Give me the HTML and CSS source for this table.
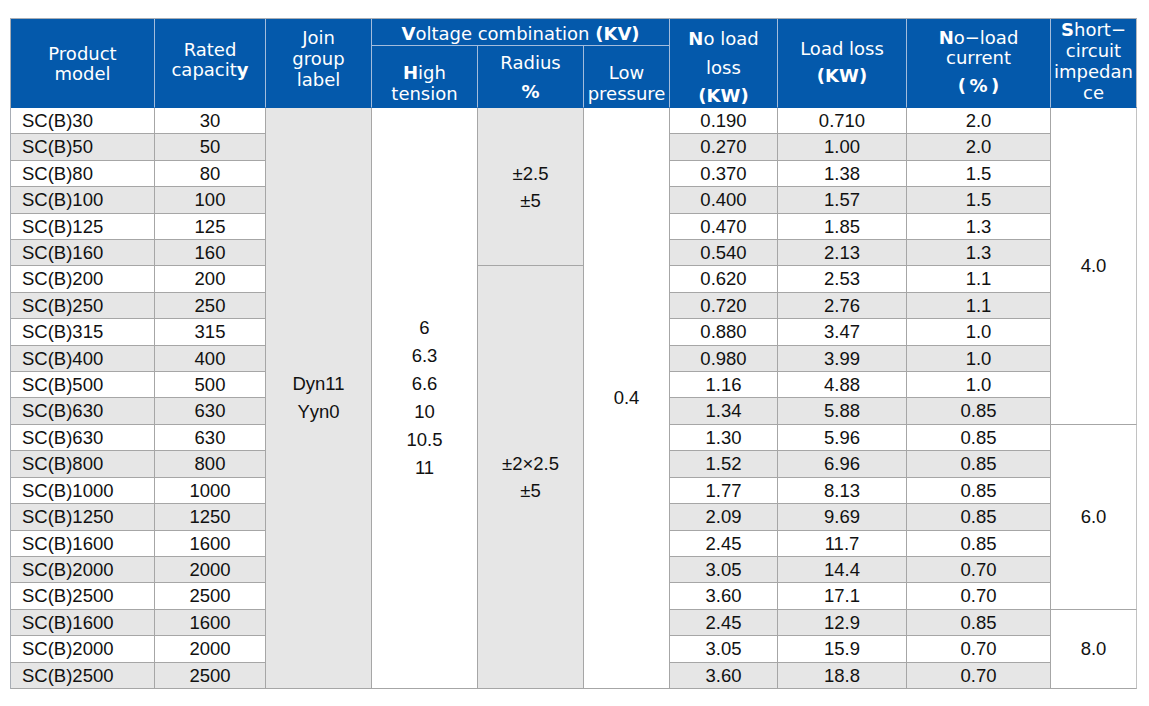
FILE: index.html
```html
<!DOCTYPE html>
<html lang="en">
<head>
<meta charset="utf-8">
<title>SC(B) dry-type transformer parameters</title>
<link rel="stylesheet" href="styles.css">
</head>
<body>
<div class="page">
  <div class="spec">
    <div class="h span2 h-model"><span class="ln">Product</span><span class="ln">model</span></div>
    <div class="h span2 h-rated"><span class="ln">Rated</span><span class="ln">capacit<b>y</b></span></div>
    <div class="h span2 h-join"><span class="ln">Join</span><span class="ln">group</span><span class="ln">label</span></div>
    <div class="h h-volt"><span class="ln"><b>V</b>oltage combination <b>(KV)</b></span></div>
    <div class="h span2 h-nll"><span class="ln"><b>N</b>o load</span><span class="ln gap">loss</span><span class="ln gap"><b>(KW)</b></span></div>
    <div class="h span2 h-ll"><span class="ln">Load loss</span><span class="ln gap"><b>(KW)</b></span></div>
    <div class="h span2 h-nlc"><span class="ln"><b>N</b>o−load</span><span class="ln">current</span><span class="ln gap"><b>(&thinsp;%&thinsp;)</b></span></div>
    <div class="h span2 h-sc last"><span class="ln"><b>S</b>hort−</span><span class="ln">circuit</span><span class="ln">impedan</span><span class="ln">ce</span></div>
    <div class="h h-high"><span class="ln"><b>H</b>igh</span><span class="ln">tension</span></div>
    <div class="h h-rad"><span class="ln">Radius</span><span class="ln gap"><b>%</b></span></div>
    <div class="h h-low"><span class="ln">Low</span><span class="ln">pressure</span></div>

    <!-- row 1 -->
    <div class="b model">SC(B)30</div><div class="b">30</div>
    <div class="b g blk r22"><span>Dyn11</span><span>Yyn0</span></div>
    <div class="b blk r22"><span>6</span><span>6.3</span><span>6.6</span><span>10</span><span>10.5</span><span>11</span></div>
    <div class="b g blk tight r6"><span>±2.5</span><span>±5</span></div>
    <div class="b blk r22"><span>0.4</span></div>
    <div class="b">0.190</div><div class="b">0.710</div><div class="b">2.0</div>
    <div class="b blk last r12"><span>4.0</span></div>
    <!-- row 2 -->
    <div class="b g model">SC(B)50</div><div class="b g">50</div><div class="b g">0.270</div><div class="b g">1.00</div><div class="b g">2.0</div>
    <div class="b model">SC(B)80</div><div class="b">80</div><div class="b">0.370</div><div class="b">1.38</div><div class="b">1.5</div>
    <div class="b g model">SC(B)100</div><div class="b g">100</div><div class="b g">0.400</div><div class="b g">1.57</div><div class="b g">1.5</div>
    <div class="b model">SC(B)125</div><div class="b">125</div><div class="b">0.470</div><div class="b">1.85</div><div class="b">1.3</div>
    <div class="b g model">SC(B)160</div><div class="b g">160</div><div class="b g">0.540</div><div class="b g">2.13</div><div class="b g">1.3</div>
    <!-- row 7 -->
    <div class="b model">SC(B)200</div><div class="b">200</div>
    <div class="b g blk tight r16"><span>±2×2.5</span><span>±5</span></div>
    <div class="b">0.620</div><div class="b">2.53</div><div class="b">1.1</div>
    <div class="b g model">SC(B)250</div><div class="b g">250</div><div class="b g">0.720</div><div class="b g">2.76</div><div class="b g">1.1</div>
    <div class="b model">SC(B)315</div><div class="b">315</div><div class="b">0.880</div><div class="b">3.47</div><div class="b">1.0</div>
    <div class="b g model">SC(B)400</div><div class="b g">400</div><div class="b g">0.980</div><div class="b g">3.99</div><div class="b g">1.0</div>
    <div class="b model">SC(B)500</div><div class="b">500</div><div class="b">1.16</div><div class="b">4.88</div><div class="b">1.0</div>
    <div class="b g model">SC(B)630</div><div class="b g">630</div><div class="b g">1.34</div><div class="b g">5.88</div><div class="b g">0.85</div>
    <!-- row 13 -->
    <div class="b model">SC(B)630</div><div class="b">630</div><div class="b">1.30</div><div class="b">5.96</div><div class="b">0.85</div>
    <div class="b blk last r7"><span>6.0</span></div>
    <div class="b g model">SC(B)800</div><div class="b g">800</div><div class="b g">1.52</div><div class="b g">6.96</div><div class="b g">0.85</div>
    <div class="b model">SC(B)1000</div><div class="b">1000</div><div class="b">1.77</div><div class="b">8.13</div><div class="b">0.85</div>
    <div class="b g model">SC(B)1250</div><div class="b g">1250</div><div class="b g">2.09</div><div class="b g">9.69</div><div class="b g">0.85</div>
    <div class="b model">SC(B)1600</div><div class="b">1600</div><div class="b">2.45</div><div class="b">11.7</div><div class="b">0.85</div>
    <div class="b g model">SC(B)2000</div><div class="b g">2000</div><div class="b g">3.05</div><div class="b g">14.4</div><div class="b g">0.70</div>
    <div class="b model">SC(B)2500</div><div class="b">2500</div><div class="b">3.60</div><div class="b">17.1</div><div class="b">0.70</div>
    <!-- row 20 -->
    <div class="b g model">SC(B)1600</div><div class="b g">1600</div><div class="b g">2.45</div><div class="b g">12.9</div><div class="b g">0.85</div>
    <div class="b blk last r3"><span>8.0</span></div>
    <div class="b model">SC(B)2000</div><div class="b">2000</div><div class="b">3.05</div><div class="b">15.9</div><div class="b">0.70</div>
    <div class="b g model">SC(B)2500</div><div class="b g">2500</div><div class="b g">3.60</div><div class="b g">18.8</div><div class="b g">0.70</div>
  </div>
</div>
</body>
</html>
```

FILE: styles.css
```css
* { box-sizing: border-box; }

html, body {
  margin: 0;
  background: #ffffff;
}

.page {
  padding: 18px 0 0 10px;
}

.spec {
  display: grid;
  grid-template-columns: 144px 111px 106px 106px 106px 86px 108px 129px 144px 86px;
  grid-template-rows: 27px 62px repeat(22, 26.41px);
  width: 1127px;
  border-top: 1px solid #a8adb5;
  border-left: 1px solid #a8adb5;
  font-family: "Liberation Sans", Arial, sans-serif;
  font-size: 18.5px;
  color: #111111;
}

/* header cells */
.h {
  background: #0459ab;
  color: #ffffff;
  font-family: "DejaVu Sans", "Noto Sans", sans-serif;
  font-size: 18px;
  text-align: center;
  white-space: nowrap;
  border-right: 1px solid #a3bcdc;
  border-bottom: 1px solid #0459ab;
  padding-top: var(--pt, 0px);
  line-height: var(--lh, 21px);
}
.h .ln { display: block; }
.h .gap { margin-top: var(--gap, 0px); }
.h b { font-weight: bold; }

.span2 { grid-row: span 2; }
.h-volt { grid-column: span 3; border-bottom-color: #a3bcdc; }

.h-model { --pt: 24.8px; --lh: 20px; }
.h-rated { --pt: 20.5px; --lh: 20.5px; }
.h-join  { --pt: 9.4px;  --lh: 20.8px; }
.h-volt  { --pt: 3.6px; }
.h-nll   { --pt: 9.3px;  --gap: 7.3px; }
.h-ll    { --pt: 18.6px; --gap: 6.4px; }
.h-nlc   { --pt: 8.7px;  --lh: 20.7px; --gap: 7px; }
.h-sc    { --pt: 0.2px;  --lh: 21.1px; }
.h-high  { --pt: 15.6px; }
.h-rad   { --pt: 5.6px;  --gap: 8px; }
.h-low   { --pt: 16.3px; }

.h.last { border-right-color: #b4b9c0; }

/* body cells */
.b {
  border-right: 1px solid #a6a6a6;
  border-bottom: 1px solid #a6a6a6;
  text-align: center;
  line-height: 25.41px;
  white-space: nowrap;
}
.b.g { background: #e6e6e6; }
.b.model { text-align: left; padding-left: 11px; }
.b.last { border-right-color: #c2c2c2; }

.blk {
  display: flex;
  flex-direction: column;
  justify-content: center;
  align-items: center;
  line-height: 28px;
}
.blk.tight { line-height: 27px; }

.r3  { grid-row: span 3; }
.r6  { grid-row: span 6; }
.r7  { grid-row: span 7; }
.r12 { grid-row: span 12; }
.r16 { grid-row: span 16; }
.r22 { grid-row: span 22; }
```
